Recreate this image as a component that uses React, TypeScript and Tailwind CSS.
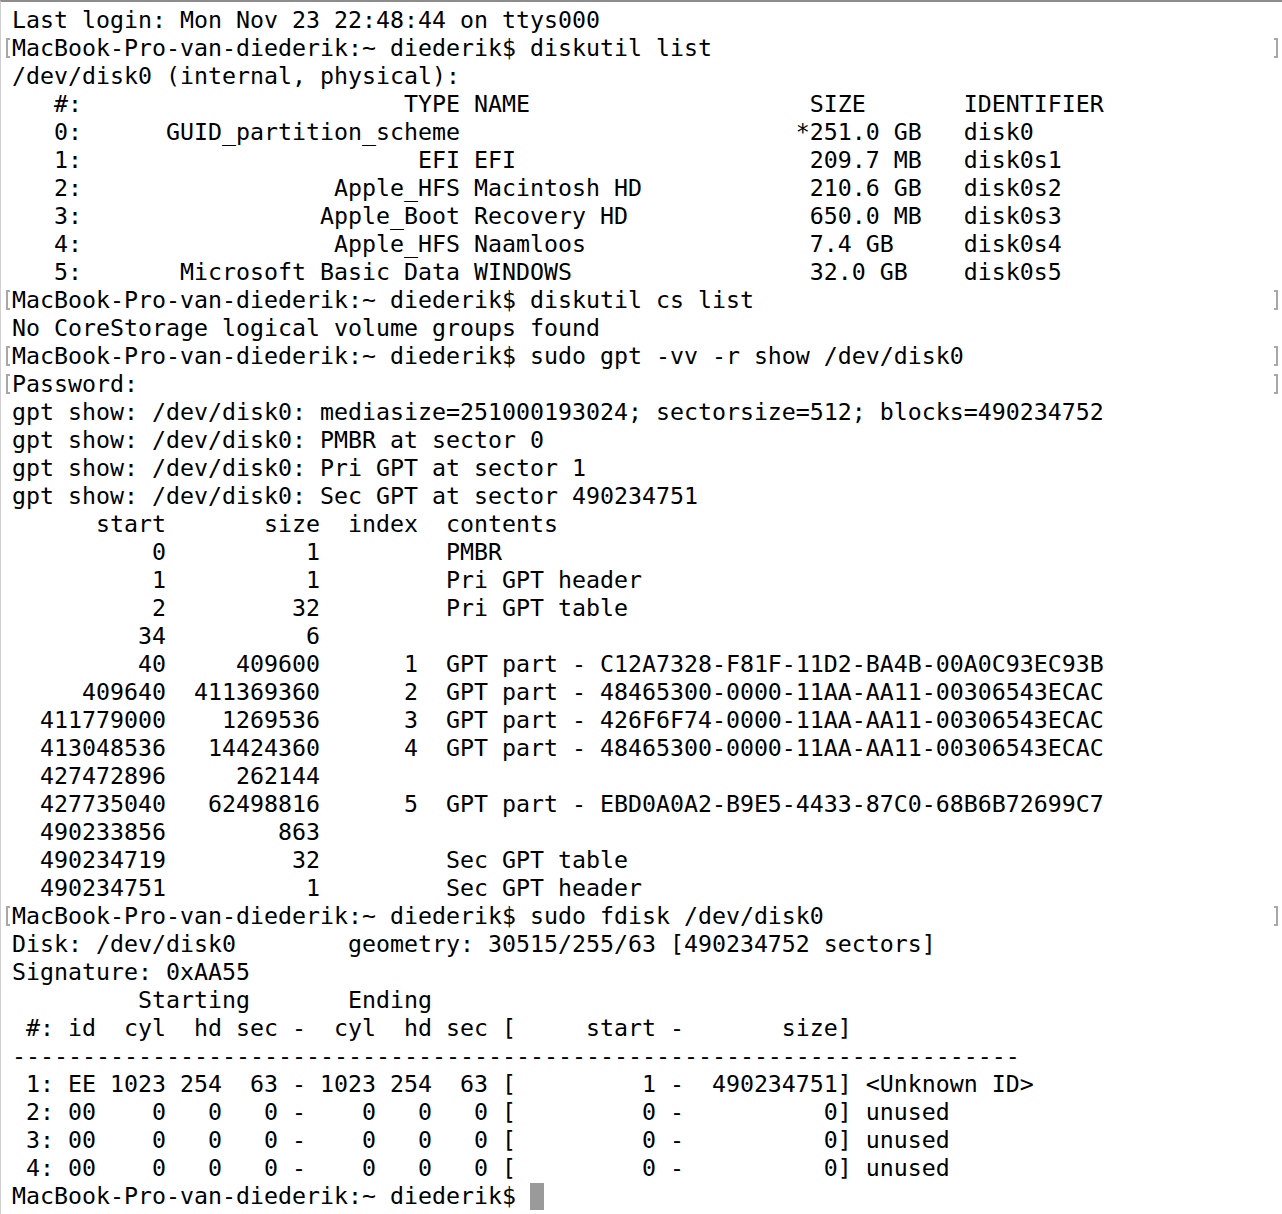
import React from "react";

type L = { t: string; mark?: boolean };

const lines: L[] = [
  { t: "Last login: Mon Nov 23 22:48:44 on ttys000" },
  { t: "MacBook-Pro-van-diederik:~ diederik$ diskutil list", mark: true },
  { t: "/dev/disk0 (internal, physical):" },
  { t: "   #:                       TYPE NAME                    SIZE       IDENTIFIER" },
  { t: "   0:      GUID_partition_scheme                        *251.0 GB   disk0" },
  { t: "   1:                        EFI EFI                     209.7 MB   disk0s1" },
  { t: "   2:                  Apple_HFS Macintosh HD            210.6 GB   disk0s2" },
  { t: "   3:                 Apple_Boot Recovery HD             650.0 MB   disk0s3" },
  { t: "   4:                  Apple_HFS Naamloos                7.4 GB     disk0s4" },
  { t: "   5:       Microsoft Basic Data WINDOWS                 32.0 GB    disk0s5" },
  { t: "MacBook-Pro-van-diederik:~ diederik$ diskutil cs list", mark: true },
  { t: "No CoreStorage logical volume groups found" },
  { t: "MacBook-Pro-van-diederik:~ diederik$ sudo gpt -vv -r show /dev/disk0", mark: true },
  { t: "Password:", mark: true },
  { t: "gpt show: /dev/disk0: mediasize=251000193024; sectorsize=512; blocks=490234752" },
  { t: "gpt show: /dev/disk0: PMBR at sector 0" },
  { t: "gpt show: /dev/disk0: Pri GPT at sector 1" },
  { t: "gpt show: /dev/disk0: Sec GPT at sector 490234751" },
  { t: "      start       size  index  contents" },
  { t: "          0          1         PMBR" },
  { t: "          1          1         Pri GPT header" },
  { t: "          2         32         Pri GPT table" },
  { t: "         34          6" },
  { t: "         40     409600      1  GPT part - C12A7328-F81F-11D2-BA4B-00A0C93EC93B" },
  { t: "     409640  411369360      2  GPT part - 48465300-0000-11AA-AA11-00306543ECAC" },
  { t: "  411779000    1269536      3  GPT part - 426F6F74-0000-11AA-AA11-00306543ECAC" },
  { t: "  413048536   14424360      4  GPT part - 48465300-0000-11AA-AA11-00306543ECAC" },
  { t: "  427472896     262144" },
  { t: "  427735040   62498816      5  GPT part - EBD0A0A2-B9E5-4433-87C0-68B6B72699C7" },
  { t: "  490233856        863" },
  { t: "  490234719         32         Sec GPT table" },
  { t: "  490234751          1         Sec GPT header" },
  { t: "MacBook-Pro-van-diederik:~ diederik$ sudo fdisk /dev/disk0", mark: true },
  { t: "Disk: /dev/disk0        geometry: 30515/255/63 [490234752 sectors]" },
  { t: "Signature: 0xAA55" },
  { t: "         Starting       Ending" },
  { t: " #: id  cyl  hd sec -  cyl  hd sec [     start -       size]" },
  { t: "------------------------------------------------------------------------" },
  { t: " 1: EE 1023 254  63 - 1023 254  63 [         1 -  490234751] <Unknown ID>" },
  { t: " 2: 00    0   0   0 -    0   0   0 [         0 -          0] unused" },
  { t: " 3: 00    0   0   0 -    0   0   0 [         0 -          0] unused" },
  { t: " 4: 00    0   0   0 -    0   0   0 [         0 -          0] unused" },
];

export default function App() {
  return (
    <div className="w-[1282px] h-[1214px] bg-white overflow-hidden border-t-2 border-t-[#8c8c8c] border-l border-l-[#cfcfcf] pt-[4px]">
      <div
        className="text-black text-[23.25px] leading-[28px]"
        style={{ fontFamily: '"DejaVu Sans Mono", "Liberation Mono", monospace' }}
      >
        {lines.map((l, i) => (
          <div key={i} className="relative h-[28px] pl-[11px] whitespace-pre">
            {l.mark && (
              <>
                <span className="absolute left-[5px] top-[4px] w-[4px] h-[20px] border-l-2 border-t-2 border-b-2 border-[#a8a8a8]" />
                <span className="absolute right-[4px] top-[4px] w-[4px] h-[20px] border-r-2 border-t-2 border-b-2 border-[#a8a8a8]" />
              </>
            )}
            {l.t}
          </div>
        ))}
        <div className="relative h-[28px] pl-[11px] whitespace-pre flex items-center">
          <span>MacBook-Pro-van-diederik:~ diederik$ </span>
          <span className="inline-block w-[14px] h-[27px] bg-[#9a9a9a]" />
        </div>
      </div>
    </div>
  );
}
